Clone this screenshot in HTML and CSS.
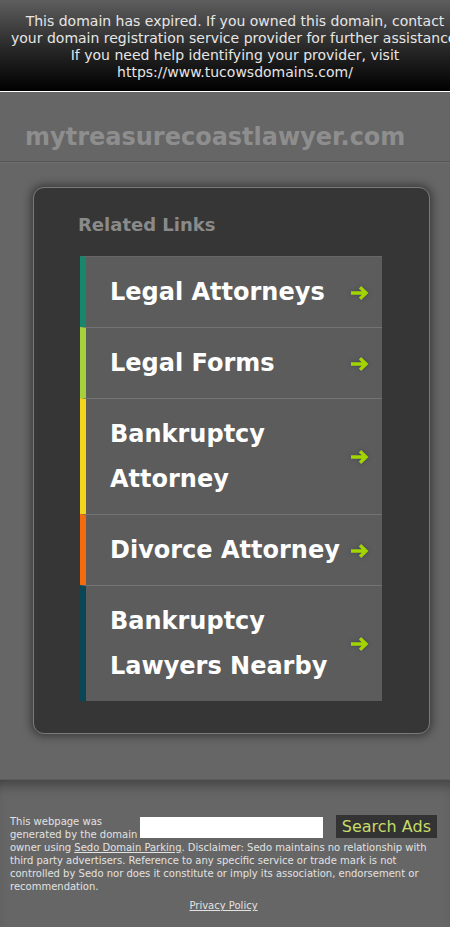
FILE: index.html
```html
<!DOCTYPE html>
<html>
<head>
<meta charset="utf-8">
<title>mytreasurecoastlawyer.com</title>
<link rel="stylesheet" href="styles.css">
</head>
<body>
<div class="notice"><div class="notice-text">This domain has expired. If you owned this domain, contact<br>your domain registration service provider for further assistance.<br>If you need help identifying your provider, visit<br>https://www.tucowsdomains.com/</div></div>

<div class="main">
  <div class="domain">mytreasurecoastlawyer.com</div>
  <div class="stage">
    <div class="card">
      <h2 class="card-title">Related Links</h2>
      <ul class="links">
        <li class="link c1"><a href="#"><span class="label">Legal Attorneys</span><svg class="arrow" viewBox="0 0 20 16"><path d="M1 8H15.5M10 2.2L16 8L10 13.8"/></svg></a></li>
        <li class="link c2"><a href="#"><span class="label">Legal Forms</span><svg class="arrow" viewBox="0 0 20 16"><path d="M1 8H15.5M10 2.2L16 8L10 13.8"/></svg></a></li>
        <li class="link c3"><a href="#"><span class="label">Bankruptcy Attorney</span><svg class="arrow" viewBox="0 0 20 16"><path d="M1 8H15.5M10 2.2L16 8L10 13.8"/></svg></a></li>
        <li class="link c4"><a href="#"><span class="label">Divorce Attorney</span><svg class="arrow" viewBox="0 0 20 16"><path d="M1 8H15.5M10 2.2L16 8L10 13.8"/></svg></a></li>
        <li class="link c5"><a href="#"><span class="label">Bankruptcy Lawyers Nearby</span><svg class="arrow" viewBox="0 0 20 16"><path d="M1 8H15.5M10 2.2L16 8L10 13.8"/></svg></a></li>
      </ul>
    </div>
  </div>
</div>

<div class="footer">
  <form class="search">
    <input class="search-input" type="text">
    <button class="search-btn" type="button">Search Ads</button>
  </form>
  <p class="disclaimer">This webpage was generated by the domain owner using <a href="#">Sedo Domain Parking</a>. Disclaimer: Sedo maintains no relationship with third party advertisers. Reference to any specific service or trade mark is not controlled by Sedo nor does it constitute or imply its association, endorsement or recommendation.</p>
  <p class="privacy"><a href="#">Privacy Policy</a></p>
</div>
</body>
</html>
```
FILE: styles.css
```css
* { box-sizing: border-box; }

html, body {
  margin: 0;
  padding: 0;
  background: #666;
  font-family: "DejaVu Sans", sans-serif;
}

/* expiry banner */
.notice {
  height: 92px;
  padding: 13px 0 0 11px;
  background: linear-gradient(#5e5e5e, #262626 55%, #000);
  border-bottom: 1px solid #fff;
  color: #e6e6e6;
  font-size: 14px;
  line-height: 17px;
  white-space: nowrap;
  overflow: hidden;
}

.notice-text {
  width: 448px;
  text-align: center;
}

.main {
  background: #666;
  border-bottom: 1px solid #5c5c5c;
  box-shadow: 0 1px 0 #6c6c6c;
  padding-bottom: 45px;
}

.domain {
  height: 70px;
  padding: 28px 0 0 25px;
  border-bottom: 1px solid #555;
  box-shadow: 0 1px 0 #6e6e6e;
  color: #8e8e8e;
  font-size: 24px;
  font-weight: bold;
  line-height: 34px;
}

.stage {
  padding: 25px 20px 0 33px;
}

.card {
  background: #363636;
  border: 1px solid #7a7a7a;
  border-radius: 11px;
  box-shadow: 0 0 8px 2px rgba(20, 20, 20, 0.55);
  padding: 25px 47px 32px 46px;
}

.card-title {
  margin: 0 0 19px -2px;
  color: #8a8a8a;
  font-size: 18px;
  font-weight: bold;
  line-height: 24px;
}

.links {
  list-style: none;
  margin: 0;
  padding: 0;
}

.link {
  background: #5c5c5c;
  border-left: 6px solid #1a8c72;
  border-top: 1px solid #737373;
}
.link:first-child { border-top-color: #666; }

.link a {
  display: flex;
  align-items: center;
  justify-content: space-between;
  padding: 13px 12px 12px 24px;
  color: #fff;
  text-decoration: none;
  font-size: 24px;
  font-weight: bold;
  line-height: 45px;
}

.label { max-width: 236px; }

.arrow {
  flex: none;
  width: 20px;
  height: 16px;
  fill: none;
  stroke: #a2d400;
  stroke-width: 3.4;
  filter: drop-shadow(0 0 2px rgba(40, 40, 90, 0.5));
}

.c1 { border-left-color: #17866d; }
.c2 { border-left-color: #a6d13c; }
.c3 { border-left-color: #f2d61e; }
.c4 { border-left-color: #f26b0f; }
.c5 { border-left-color: #0b4656; }

/* footer */
.footer {
  padding: 35px 13px 14px 10px;
  background: #666;
  box-shadow: inset 0 12px 14px -8px rgba(0, 0, 0, 0.4);
  color: #e2e2e2;
  font-size: 10px;
  line-height: 13px;
}

.search {
  float: right;
  display: flex;
  align-items: center;
  gap: 13px;
  margin: 0;
}

.search-input {
  width: 183px;
  height: 21px;
  margin: 1px 0 0;
  border: none;
  background: #fff;
  padding: 0;
}

.search-btn {
  height: 23px;
  padding: 0 6px;
  border: none;
  background: #333;
  color: #c6dc6a;
  font-family: "DejaVu Sans", sans-serif;
  font-size: 16px;
  line-height: 23px;
}

.disclaimer { margin: 0; }

.disclaimer a, .privacy a { color: #e2e2e2; }

.privacy {
  margin: 6px 0 0;
  text-align: center;
  font-size: 10px;
}
```
